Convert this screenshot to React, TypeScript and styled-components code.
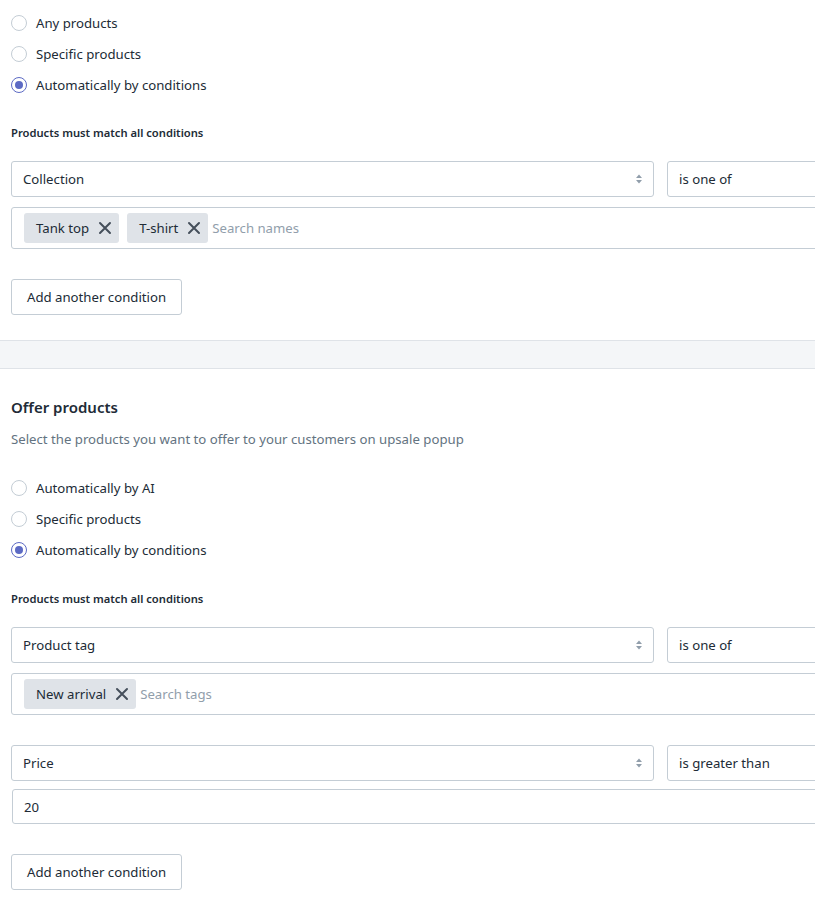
import styled, { createGlobalStyle } from "styled-components";

const GlobalStyle = createGlobalStyle`
  html, body {
    margin: 0;
    padding: 0;
    overflow: hidden;
    background: #ffffff;
  }
  body {
    font-family: "Noto Sans", "Liberation Sans", sans-serif;
    color: #212b36;
    font-size: 13.2px;
  }
  * { box-sizing: border-box; }
`

const Page = styled.div`
  width: 1000px;
`

const Section = styled.section<{ $top: number; $bottom: number }>`
  padding: ${p => p.$top}px 0 ${p => p.$bottom}px 11px;
`

const Band = styled.div`
  height: 29px;
  background: #f4f6f8;
  border-top: 1px solid #dfe3e8;
  border-bottom: 1px solid #dfe3e8;
`

const Heading = styled.h2`
  margin: 0;
  font-size: 15px;
  line-height: 24px;
  font-weight: 600;
`

const Description = styled.p`
  margin: 10px 0 0;
  line-height: 20px;
  color: #637381;
`

const RadioList = styled.div<{ $top: number }>`
  display: flex;
  flex-direction: column;
  margin-top: ${p => p.$top}px;
`

const RadioRow = styled.label`
  display: flex;
  align-items: center;
  gap: 9px;
  height: 31px;
  line-height: 20px;
`

const RadioCircle = styled.span<{ $checked?: boolean }>`
  width: 16px;
  height: 16px;
  border-radius: 50%;
  border: 1px solid ${p => (p.$checked ? "#5c6ac4" : "#c4cdd5")};
  display: flex;
  align-items: center;
  justify-content: center;
  background: #fff;
  &::after {
    content: "";
    width: 8px;
    height: 8px;
    border-radius: 50%;
    background: ${p => (p.$checked ? "#5c6ac4" : "transparent")};
  }
`

const MatchLabel = styled.div<{ $top: number }>`
  margin-top: ${p => p.$top}px;
  font-size: 11.2px;
  line-height: 16px;
  font-weight: 600;
`

const Conditions = styled.div`
  display: flex;
  flex-direction: column;
  gap: 30px;
  margin-top: 20px;
`

const Condition = styled.div`
  display: flex;
  flex-direction: column;
  gap: 10px;
`

const SelectRow = styled.div`
  display: grid;
  grid-template-columns: 643px 1fr;
  gap: 13px;
`

const Field = styled.div`
  height: 36px;
  border: 1px solid #c4cdd5;
  border-radius: 3px;
  display: flex;
  align-items: center;
  justify-content: space-between;
  padding: 0 10px 0 11px;
  background: #fff;
`

const ValueInput = styled(Field)`
  height: 35px;
  margin: -2px 0 0 1px;
`

const TagBox = styled.div`
  height: 42px;
  border: 1px solid #c4cdd5;
  border-radius: 3px;
  display: flex;
  align-items: center;
  gap: 8px;
  padding: 0 12px;
`

const Tag = styled.span`
  display: inline-flex;
  align-items: center;
  height: 30px;
  padding: 0 7px 0 12px;
  gap: 9px;
  background: #dfe3e8;
  border-radius: 3px;
  line-height: 20px;
`

const Placeholder = styled.span`
  color: #919eab;
  margin-left: -4px;
`

const Button = styled.button`
  margin-top: 30px;
  height: 36px;
  padding: 0 15px;
  border: 1px solid #c4cdd5;
  border-radius: 3px;
  background: #fff;
  font: inherit;
  color: #212b36;
`

const Chevron = () => (
  <svg width="8" height="12" viewBox="0 0 8 12">
    <path d="M4 1.5 L7 5 H1 Z" fill="#919eab" />
    <path d="M4 10.5 L7 7 H1 Z" fill="#919eab" />
  </svg>
)

const CloseIcon = () => (
  <svg width="14" height="14" viewBox="0 0 14 14">
    <path d="M2 2 L12 12 M12 2 L2 12" stroke="#454f5b" strokeWidth="2" strokeLinecap="round" />
  </svg>
)

const Radios = ({ options, checked, top }: { options: string[]; checked: number; top: number }) => (
  <RadioList $top={top}>
    {options.map((o, i) => (
      <RadioRow key={o}>
        <RadioCircle $checked={i === checked} />
        {o}
      </RadioRow>
    ))}
  </RadioList>
)

const SelectPair = ({ field, op }: { field: string; op: string }) => (
  <SelectRow>
    <Field>
      {field}
      <Chevron />
    </Field>
    <Field>{op}</Field>
  </SelectRow>
)

export default function App() {
  return (
    <Page>
      <GlobalStyle />
      <Section $top={7} $bottom={25}>
        <Radios options={["Any products", "Specific products", "Automatically by conditions"]} checked={2} top={0} />
        <MatchLabel $top={25}>Products must match all conditions</MatchLabel>
        <Conditions>
          <Condition>
            <SelectPair field="Collection" op="is one of" />
            <TagBox>
              <Tag>Tank top <CloseIcon /></Tag>
              <Tag>T-shirt <CloseIcon /></Tag>
              <Placeholder>Search names</Placeholder>
            </TagBox>
          </Condition>
        </Conditions>
        <Button>Add another condition</Button>
      </Section>
      <Band />
      <Section $top={26} $bottom={20}>
        <Heading>Offer products</Heading>
        <Description>Select the products you want to offer to your customers on upsale popup</Description>
        <Radios options={["Automatically by AI", "Specific products", "Automatically by conditions"]} checked={2} top={23} />
        <MatchLabel $top={26}>Products must match all conditions</MatchLabel>
        <Conditions>
          <Condition>
            <SelectPair field="Product tag" op="is one of" />
            <TagBox>
              <Tag>New arrival <CloseIcon /></Tag>
              <Placeholder>Search tags</Placeholder>
            </TagBox>
          </Condition>
          <Condition>
            <SelectPair field="Price" op="is greater than" />
            <ValueInput>20</ValueInput>
          </Condition>
        </Conditions>
        <Button>Add another condition</Button>
      </Section>
    </Page>
  )
}
